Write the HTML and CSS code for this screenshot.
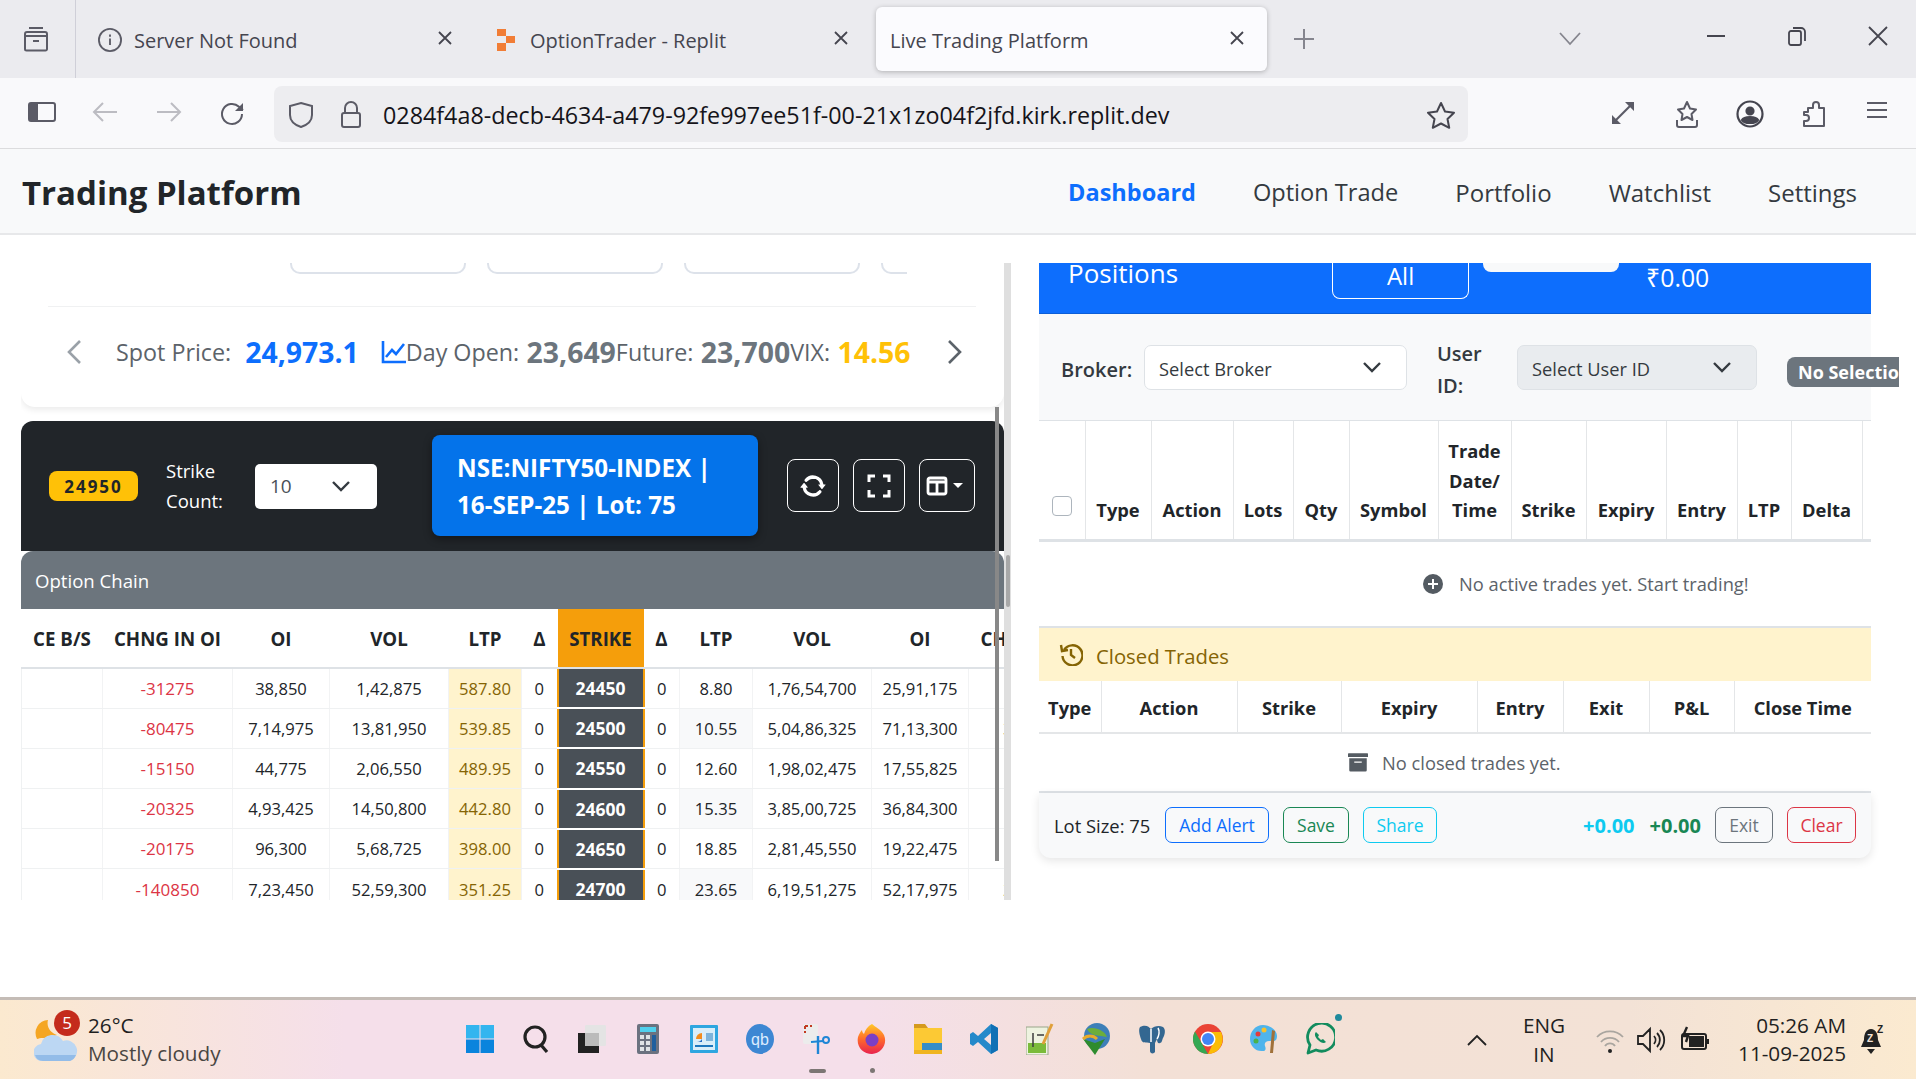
FILE: index.html
```html
<!DOCTYPE html>
<html lang="en">
<head>
	<meta charset="UTF-8">
	<title>Live Trading Platform</title>
	<link rel="stylesheet" href="styles.css">
</head>
<body>
	<div class="tabbar">
		<div class="tab-side">
			<svg width="28" height="28" viewBox="0 0 28 28" fill="none" stroke="#5b5b66" stroke-width="2"><path d="M7 3h14M3 9a2 2 0 0 1 2-2h18a2 2 0 0 1 2 2v15a1.500 1.500 0 0 1-1.500 1.500h-19A1.500 1.500 0 0 1 3 24zM3 11h22M11 16h6"/></svg>
		</div>
		<div class="tab">
			<span class="tab-icon"><svg width="26" height="26" viewBox="0 0 26 26" fill="none" stroke="#5b5b66" stroke-width="2"><circle cx="13" cy="13" r="12"/><path d="M13 11.500v7M13 7v2.500"/></svg></span>
			<span class="tab-title">Server Not Found</span>
			<svg class="tab-close" width="16" height="16" viewBox="0 0 16 16" stroke="#45454f" stroke-width="1.800"><path d="M2 2l12 12M14 2L2 14"/></svg>
		</div>
		<div class="tab">
			<span class="tab-icon"><svg width="18" height="22" viewBox="0 0 18 22" fill="#f26207"><rect x="0" y="0" width="9" height="7" opacity=".8"/><rect x="9" y="7" width="9" height="7" opacity=".8"/><rect x="0" y="14" width="9" height="8" opacity=".8"/></svg></span>
			<span class="tab-title">OptionTrader - Replit</span>
			<svg class="tab-close" width="16" height="16" viewBox="0 0 16 16" stroke="#45454f" stroke-width="1.800"><path d="M2 2l12 12M14 2L2 14"/></svg>
		</div>
		<div class="tab tab-active">
			<span class="tab-title">Live Trading Platform</span>
			<svg class="tab-close" width="16" height="16" viewBox="0 0 16 16" stroke="#45454f" stroke-width="1.800"><path d="M2 2l12 12M14 2L2 14"/></svg>
		</div>
		<div class="tab-new">
			<svg width="22" height="22" viewBox="0 0 22 22" stroke="#85858e" stroke-width="2"><path d="M11 1v20M1 11h20"/></svg>
		</div>
		<div class="tab-list">
			<svg width="22" height="14" viewBox="0 0 22 14" fill="none" stroke="#85858e" stroke-width="1.800"><path d="M1 1l10 11L21 1"/></svg>
		</div>
		<div class="win-btn">
			<svg width="20" height="4" viewBox="0 0 20 4" stroke="#45454f" stroke-width="2"><path d="M1 2h18"/></svg>
		</div>
		<div class="win-btn">
			<svg width="20" height="20" viewBox="0 0 20 20" fill="none" stroke="#45454f" stroke-width="1.800"><rect x="2" y="5" width="12" height="14" rx="2"/><path d="M6 2h8a4 4 0 0 1 4 4v9"/></svg>
		</div>
		<div class="win-btn">
			<svg width="20" height="20" viewBox="0 0 20 20" stroke="#45454f" stroke-width="1.800"><path d="M1 1l18 18M19 1L1 19"/></svg>
		</div>
	</div>

	<div class="toolbar">
		<div class="tool-group">
			<span class="tool-btn"><svg width="28" height="22" viewBox="0 0 28 22" fill="none" stroke="#5b5b66" stroke-width="2"><rect x="1" y="2" width="26" height="18" rx="2"/><path d="M3 3h6v16H3z" fill="#5b5b66"/></svg></span>
			<span class="tool-btn"><svg width="26" height="22" viewBox="0 0 26 22" fill="none" stroke="#bcbcc2" stroke-width="2"><path d="M25 11H2M11 2l-9 9 9 9"/></svg></span>
			<span class="tool-btn"><svg width="26" height="22" viewBox="0 0 26 22" fill="none" stroke="#bcbcc2" stroke-width="2"><path d="M1 11h23M15 2l9 9-9 9"/></svg></span>
			<span class="tool-btn"><svg width="26" height="26" viewBox="0 0 26 26" fill="none" stroke="#5b5b66" stroke-width="2"><path d="M23 13a10 10 0 1 1-3-7.200L24 9"/><path d="M24 2v8h-8z" fill="#5b5b66" stroke="none"/></svg></span>
		</div>
		<div class="urlbar">
			<svg class="url-shield" width="26" height="28" viewBox="0 0 26 28" fill="none" stroke="#5b5b66" stroke-width="2"><path d="M13 2l11 3v9c0 6-5 10-11 12C7 24 2 20 2 14V5z"/></svg>
			<svg class="url-lock" width="22" height="28" viewBox="0 0 22 28" fill="none" stroke="#5b5b66" stroke-width="2"><path d="M5 12V7a6 6 0 0 1 12 0v5"/><rect x="2" y="12" width="18" height="14" rx="2"/></svg>
			<span class="url-text">0284f4a8-decb-4634-a479-92fe997ee51f-00-21x1zo04f2jfd.kirk.replit.dev</span>
			<svg class="url-star" width="30" height="28" viewBox="0 0 30 28" fill="none" stroke="#45454f" stroke-width="2"><path d="M15 2l4 8.500 9 1.200-6.500 6.300 1.700 8.800L15 22.500l-8.200 4.300L8.500 18 2 11.700l9-1.200z" stroke-linejoin="round"/></svg>
		</div>
		<div class="tool-group tool-right">
			<span class="tool-btn"><svg width="26" height="26" viewBox="0 0 26 26" fill="none" stroke="#5b5b66" stroke-width="2.200"><path d="M3 23L23 3"/><path d="M15 2h9v9zM2 15v9h9z" fill="#5b5b66" stroke="none"/></svg></span>
			<span class="tool-btn"><svg width="26" height="28" viewBox="0 0 26 28" fill="none" stroke="#5b5b66" stroke-width="2"><path d="M13 2l3 6.500 6 1-4.500 4.500 1 6L13 17l-5.500 3 1-6L4 9.500l6-1z" stroke-linejoin="round"/><path d="M3 20v5a2 2 0 0 0 2 2h16a2 2 0 0 0 2-2v-5"/></svg></span>
			<span class="tool-btn"><svg width="28" height="28" viewBox="0 0 28 28" fill="none" stroke="#45454f" stroke-width="2.200"><circle cx="14" cy="14" r="12.500"/><circle cx="14" cy="11" r="3.500" fill="#45454f"/><path d="M6 20c2-4 14-4 16 0-2 4-14 4-16 0z" fill="#45454f"/></svg></span>
			<span class="tool-btn"><svg width="26" height="28" viewBox="0 0 26 28" fill="none" stroke="#5b5b66" stroke-width="2"><path d="M3 12h4V8h5V5a3 3 0 0 1 6 0v3h5v18H3v-5h2a3 3 0 0 0 0-6H3z" stroke-linejoin="round"/></svg></span>
			<span class="tool-btn"><svg width="24" height="20" viewBox="0 0 24 20" stroke="#5b5b66" stroke-width="2"><path d="M2 3h20M2 10h20M2 17h20"/></svg></span>
		</div>
	</div>

	<div class="navbar">
		<div class="brand">Trading Platform</div>
		<nav class="nav-links">
			<a class="nav-link nav-current">Dashboard</a>
			<a class="nav-link">Option Trade</a>
			<a class="nav-link">Portfolio</a>
			<a class="nav-link">Watchlist</a>
			<a class="nav-link">Settings</a>
		</nav>
	</div>

	<div class="page">
		<div class="page-clip">
			<div class="left-col">
				<div class="market-card">
					<div class="idx-cards">
						<div class="idx-card"></div>
						<div class="idx-card"></div>
						<div class="idx-card"></div>
						<div class="idx-card idx-card-cut"></div>
					</div>
					<div class="price-row">
						<svg class="price-prev" width="18" height="26" viewBox="0 0 18 26" fill="none" stroke="#9aa1a8" stroke-width="2.600"><path d="M15 2L4 13l11 11"/></svg>
						<span class="price-label">Spot Price:</span>
						<b class="price-spot">24,973.1</b>
						<svg class="price-chart" width="25" height="24" viewBox="0 0 25 24" fill="none" stroke="#0d6efd" stroke-width="2.600"><path d="M2 1v21h23" /><path d="M5 17l6-7 4 4 8-10" /></svg>
						<span class="price-label">Day Open:</span>
						<b class="price-val">&nbsp;23,649</b>
						<span class="price-label">Future:</span>
						<b class="price-val">&nbsp;23,700</b>
						<span class="price-label">VIX:</span>
						<b class="price-vix">&nbsp;14.56</b>
						<svg class="price-next" width="18" height="26" viewBox="0 0 18 26" fill="none" stroke="#5c636a" stroke-width="2.600"><path d="M3 2l11 11L3 24"/></svg>
					</div>
				</div>

				<div class="chain-bar">
					<span class="atm-badge">24950</span>
					<span class="strike-label">Strike Count:</span>
					<div class="strike-select">
						<span>10</span>
						<svg width="20" height="12" viewBox="0 0 20 12" fill="none" stroke="#343a40" stroke-width="2.400"><path d="M2 2l8 8 8-8"/></svg>
					</div>
					<div class="symbol-box">NSE:NIFTY50-INDEX | 16-SEP-25 | Lot: 75</div>
					<span class="bar-btn"><svg width="26" height="26" viewBox="0 0 16 16" fill="#fff"><path d="M11.534 7h3.932a.25.25 0 0 1 .192.41l-1.966 2.360a.25.25 0 0 1-.384 0l-1.966-2.360a.25.25 0 0 1 .192-.41zm-11 2h3.932a.25.25 0 0 0 .192-.41L2.692 6.230a.25.25 0 0 0-.384 0L.342 8.590A.25.25 0 0 0 .534 9z"/><path fill-rule="evenodd" d="M8 3c-1.552 0-2.940.707-3.857 1.818a.5.5 0 1 1-.771-.636A6.002 6.002 0 0 1 13.917 7H12.900A5.002 5.002 0 0 0 8 3zM3.100 9a5.002 5.002 0 0 0 8.757 2.182.5.5 0 1 1 .771.636A6.002 6.002 0 0 1 2.083 9H3.100z" stroke="#fff" stroke-width="1"/></svg></span>
					<span class="bar-btn"><svg width="24" height="24" viewBox="0 0 24 24" fill="none" stroke="#fff" stroke-width="3"><path d="M2 8V2h6M16 2h6v6M22 16v6h-6M8 22H2v-6"/></svg></span>
					<span class="bar-btn bar-btn-wide"><svg width="22" height="22" viewBox="0 0 22 22" fill="none" stroke="#fff" stroke-width="2.800"><rect x="2" y="3" width="18" height="16" rx="2"/><path d="M2 7h18M11 7v12"/></svg><i class="caret"></i></span>
				</div>

				<div class="chain-head">Option Chain</div>
				<table class="chain">
					<colgroup><col class="c-bs"><col class="c-chng"><col class="c-oi"><col class="c-vol"><col class="c-ltp"><col class="c-delta"><col class="c-strike"><col class="c-delta"><col class="c-ltp"><col class="c-vol"><col class="c-oi"><col class="c-rest"></colgroup>
					<thead>
						<tr><th>CE B/S</th><th>CHNG IN OI</th><th>OI</th><th>VOL</th><th>LTP</th><th>Δ</th><th class="strike-head">STRIKE</th><th>Δ</th><th>LTP</th><th>VOL</th><th>OI</th><th class="cut-head">CHNG</th></tr>
					</thead>
					<tbody>
						<tr><td></td><td class="neg">-31275</td><td>38,850</td><td>1,42,875</td><td class="ltp-ce">587.80</td><td>0</td><td class="strike">24450</td><td>0</td><td>8.80</td><td>1,76,54,700</td><td>25,91,175</td><td class="pos">1</td></tr>
						<tr><td></td><td class="neg">-80475</td><td>7,14,975</td><td>13,81,950</td><td class="ltp-ce">539.85</td><td>0</td><td class="strike">24500</td><td>0</td><td class="ltp-pe">10.55</td><td>5,04,86,325</td><td>71,13,300</td><td class="pos">3</td></tr>
						<tr><td></td><td class="neg">-15150</td><td>44,775</td><td>2,06,550</td><td class="ltp-ce">489.95</td><td>0</td><td class="strike">24550</td><td>0</td><td>12.60</td><td>1,98,02,475</td><td>17,55,825</td><td class="pos"></td></tr>
						<tr><td></td><td class="neg">-20325</td><td>4,93,425</td><td>14,50,800</td><td class="ltp-ce">442.80</td><td>0</td><td class="strike">24600</td><td>0</td><td class="ltp-pe">15.35</td><td>3,85,00,725</td><td>36,84,300</td><td class="pos">1</td></tr>
						<tr><td></td><td class="neg">-20175</td><td>96,300</td><td>5,68,725</td><td class="ltp-ce">398.00</td><td>0</td><td class="strike">24650</td><td>0</td><td>18.85</td><td>2,81,45,550</td><td>19,22,475</td><td class="pos"></td></tr>
						<tr><td></td><td class="neg">-140850</td><td>7,23,450</td><td>52,59,300</td><td class="ltp-ce">351.25</td><td>0</td><td class="strike">24700</td><td>0</td><td class="ltp-pe">23.65</td><td>6,19,51,275</td><td>52,17,975</td><td class="pos">2</td></tr>
					</tbody>
				</table>
				<div class="inner-thumb"></div>
			</div>

			<div class="outer-track"><div class="outer-thumb"></div></div>

			<div class="right-col">
				<div class="pos-head">
					<span class="pos-title">Positions</span>
					<span class="pos-all">All</span>
					<span class="pos-pill"></span>
					<span class="pos-total">₹0.00</span>
				</div>
				<div class="filters">
					<label class="f-label f-broker">Broker:</label>
					<div class="f-select f-select-broker"><span>Select Broker</span><svg width="20" height="12" viewBox="0 0 20 12" fill="none" stroke="#343a40" stroke-width="2.400"><path d="M2 2l8 8 8-8"/></svg></div>
					<label class="f-label f-user">User ID:</label>
					<div class="f-select f-select-user"><span>Select User ID</span><svg width="20" height="12" viewBox="0 0 20 12" fill="none" stroke="#343a40" stroke-width="2.400"><path d="M2 2l8 8 8-8"/></svg></div>
					<span class="no-sel">No Selection</span>
				</div>
				<table class="active-table">
					<colgroup><col class="a1"><col class="a2"><col class="a3"><col class="a4"><col class="a5"><col class="a6"><col class="a7"><col class="a8"><col class="a9"><col class="a10"><col class="a11"><col class="a12"><col class="a13"></colgroup>
					<thead>
						<tr><th><span class="check"></span></th><th>Type</th><th>Action</th><th>Lots</th><th>Qty</th><th>Symbol</th><th>Trade Date/ Time</th><th>Strike</th><th>Expiry</th><th>Entry</th><th>LTP</th><th>Delta</th><th></th></tr>
					</thead>
				</table>
				<div class="empty-active">
					<svg width="20" height="20" viewBox="0 0 20 20"><circle cx="10" cy="10" r="10" fill="#545b62"/><path d="M10 5v10M5 10h10" stroke="#fff" stroke-width="2"/></svg>
					<span>No active trades yet. Start trading!</span>
				</div>
				<div class="closed-head">
					<svg width="24" height="24" viewBox="0 0 24 24" fill="none" stroke="#856404" stroke-width="2.400"><path d="M5 8a10 10 0 1 1-1.500 6"/><path d="M2 3l1 6 6-1" /><path d="M12 7v6l4 3"/></svg>
					<span class="closed-title">Closed Trades</span>
				</div>
				<table class="closed-table">
					<colgroup><col class="b1"><col class="b2"><col class="b3"><col class="b4"><col class="b5"><col class="b6"><col class="b7"><col class="b8"></colgroup>
					<thead>
						<tr><th>Type</th><th>Action</th><th>Strike</th><th>Expiry</th><th>Entry</th><th>Exit</th><th>P&amp;L</th><th>Close Time</th></tr>
					</thead>
				</table>
				<div class="empty-closed">
					<svg width="20" height="20" viewBox="0 0 16 16" fill="#545b62"><path d="M0 1.500A.5.5 0 0 1 .5 1h15a.5.5 0 0 1 .5.5V4H0zM1 5h14v9.500a1 1 0 0 1-1 1H2a1 1 0 0 1-1-1zm4 2.500v1h6v-1z" fill-rule="evenodd"/></svg>
					<span>No closed trades yet.</span>
				</div>
				<div class="pos-foot">
					<span class="lot-size">Lot Size: 75</span>
					<span class="btn btn-blue">Add Alert</span>
					<span class="btn btn-green">Save</span>
					<span class="btn btn-cyan">Share</span>
					<b class="pnl pnl-cyan">+0.00</b>
					<b class="pnl pnl-green">+0.00</b>
					<span class="btn btn-gray">Exit</span>
					<span class="btn btn-red">Clear</span>
				</div>
			</div>
		</div>
	</div>

	<div class="taskbar">
		<div class="weather">
			<svg class="weather-icon" width="44" height="46" viewBox="0 0 44 46"><path d="M14 3a13 13 0 0 0-11 19c3-1 8-2 12 1 2-3 5-4 8-5-6-2-11-8-9-15z" fill="#f5a623"/><path d="M9 44a8.500 8.500 0 0 1-2-17 12 12 0 0 1 22-3 10 10 0 0 1 7 20z" fill="#bcd7f3"/><path d="M9 44a8.500 8.500 0 0 1-8-6h41a10 10 0 0 1-6 6z" fill="#93bce8"/></svg>
			<span class="weather-badge">5</span>
			<div class="weather-text"><span>26°C</span><span class="weather-sub">Mostly cloudy</span></div>
		</div>
		<div class="task-icons">
			<span class="task-icon"><svg width="28" height="28" viewBox="0 0 28 28"><path d="M0 0h13.500v13.500H0zM14.500 0H28v13.500H14.500z" fill="#33b5ef"/><path d="M0 14.500h13.500V28H0zM14.500 14.500H28V28H14.500z" fill="#0a84dd"/></svg></span>
			<span class="task-icon"><svg width="28" height="30" viewBox="0 0 28 30" fill="none" stroke="#222" stroke-width="3.200"><circle cx="13" cy="13" r="10"/><path d="M19 21l6 7"/></svg></span>
			<span class="task-icon"><svg width="28" height="28" viewBox="0 0 28 28"><rect x="0" y="8" width="21" height="20" fill="#222"/><rect x="7" y="0" width="21" height="21" rx="1" fill="#e4e4e4"/><rect x="7" y="8" width="14" height="13" fill="#bbb"/></svg></span>
			<span class="task-icon"><svg width="22" height="30" viewBox="0 0 22 30"><rect width="22" height="30" rx="2" fill="#6b7280"/><rect x="3" y="3" width="16" height="5" fill="#4fd0ee"/><path d="M3 11h4v4H3zM9 11h4v4H9zM3 17h4v4H3zM9 17h4v4H9zM3 23h4v4H3zM9 23h4v4H9z" fill="#dfe3e6"/><path d="M15 11h4v16h-4z" fill="#1f5f9e"/></svg></span>
			<span class="task-icon"><svg width="28" height="28" viewBox="0 0 28 28"><rect width="28" height="28" rx="1" fill="#2ea6e0"/><rect x="3" y="3" width="22" height="22" fill="#d9eef9"/><path d="M6 14a6 6 0 0 1 6-6v6z" fill="#f28c1e"/><path d="M12 14a6 6 0 0 1-6 3h6z" fill="#2a6fc4"/><path d="M16 8h7v8h-7z" fill="#7fb4da"/><path d="M5 20h18v2H5z" fill="#1d77bd"/></svg></span>
			<span class="task-icon"><svg width="28" height="30" viewBox="0 0 28 30"><ellipse cx="14" cy="15" rx="14" ry="15" fill="#3d87d3"/><text x="14" y="21" font-family="Liberation Sans" font-size="16" fill="#dcecff" text-anchor="middle">qb</text></svg></span>
			<span class="task-icon"><svg width="30" height="34" viewBox="0 0 30 34" fill="none"><rect x="2" y="2" width="15" height="20" rx="2" fill="#ececec"/><path d="M4 4h3M9 4h2M4 4v3M4 9v2" stroke="#c23b22" stroke-width="2"/><path d="M17 14v18" stroke="#1f86d6" stroke-width="2.400"/><circle cx="25" cy="18" r="3" stroke="#1f86d6" stroke-width="2"/><path d="M10 20l12-1" stroke="#1f86d6" stroke-width="2"/></svg></span>
			<span class="task-icon"><svg width="30" height="32" viewBox="0 0 30 32"><defs><linearGradient id="ff" x1="0" y1="0" x2="0" y2="1"><stop offset="0" stop-color="#ffc928"/><stop offset=".5" stop-color="#ff6b2b"/><stop offset="1" stop-color="#e8224f"/></linearGradient></defs><path d="M15 1c3 3 9 5 12 11 4 9-3 19-12 19S-1 24 1 14c1-3 3-6 4-7 0 2 1 3 2 4 1-4 4-8 8-10z" fill="url(#ff)"/><circle cx="15" cy="17" r="6.500" fill="#7b3fc4"/></svg></span>
			<span class="task-icon"><svg width="28" height="30" viewBox="0 0 28 30"><path d="M0 0h11l3 4h-14z" fill="#d59a1e"/><rect y="4" width="28" height="26" fill="#fcc934"/><rect x="8" y="19" width="20" height="11" fill="#1f86d6" opacity=".9"/><rect y="26" width="28" height="4" fill="#f0b420"/></svg></span>
			<span class="task-icon"><svg width="28" height="30" viewBox="0 0 28 30"><path d="M21 0l7 4v22l-7 4L8 18l-5 4-3-2v-10l3-2 5 4zM21 9l-7 6 7 6z" fill="#2489ca"/><path d="M21 0l7 4v22l-7 4z" fill="#1070b5"/></svg></span>
			<span class="task-icon"><svg width="28" height="32" viewBox="0 0 28 32"><rect x="0" y="4" width="22" height="28" fill="#eef3e0" stroke="#9aa58a"/><rect x="2" y="20" width="18" height="10" fill="#7bbb3a"/><path d="M7 10v14M11 12h7" stroke="#3c3c3c" stroke-width="1.500"/><path d="M26 1l-9 20" stroke="#e0a03a" stroke-width="3"/></svg></span>
			<span class="task-icon"><svg width="30" height="32" viewBox="0 0 30 32"><circle cx="16" cy="13" r="13" fill="#3d7fb8"/><path d="M6 6c8-3 18 2 20 8-8-2-16 0-20-8z" fill="#6cae3b"/><path d="M2 16l12 4 10-4-10 16z" fill="#2e8b2e"/><path d="M2 16c4-4 10-4 14 0" stroke="#e8ab2a" stroke-width="3" fill="none"/></svg></span>
			<span class="task-icon"><svg width="28" height="30" viewBox="0 0 28 30"><path d="M2 3c6-3 9 0 11 2 3-3 8-4 12-2 3 2 2 8 0 11-1 2-1 5-3 5-2 1-3-1-3-4l-2 4v9c-1 2-5 2-5-1v-8C8 18 4 20 3 15 2 12 0 6 2 3z" fill="#336791"/><path d="M13 5v13M20 4c2 3 1 8-1 11" stroke="#fff" stroke-width="1.500" fill="none"/></svg></span>
			<span class="task-icon"><svg width="30" height="30" viewBox="0 0 30 30"><circle cx="15" cy="15" r="15" fill="#ea4335"/><path d="M2 7.500L15 30A15 15 0 0 1 2 7.500z" fill="#34a853"/><path d="M15 8h13a15 15 0 0 1-13 22l7-15z" fill="#fbbc05"/><circle cx="15" cy="15" r="7.500" fill="#fff"/><circle cx="15" cy="15" r="6" fill="#4285f4"/></svg></span>
			<span class="task-icon"><svg width="28" height="30" viewBox="0 0 28 30"><path d="M13 1C5 1 0 8 0 15s6 13 13 12c3 0 3-3 2-5-1-3 1-5 4-5h4c3 0 4-2 4-5C27 6 20 1 13 1z" fill="#4fb4ec"/><circle cx="8" cy="10" r="2.500" fill="#e33b3b"/><circle cx="14" cy="6" r="2.500" fill="#f6c22c"/><circle cx="6" cy="17" r="2.500" fill="#49b24a"/><path d="M22 6l3 1-2 22h-3z" fill="#a0713a"/></svg></span>
			<span class="task-icon"><svg width="30" height="32" viewBox="0 0 30 32" fill="none"><path d="M3 30l2-8a14 14 0 1 1 6 5z" stroke="#128c5e" stroke-width="2.800" stroke-linejoin="round"/><path d="M11 9c-2 2-1 5 2 8s6 4 8 2l-3-3-2 1-3-3 1-2z" fill="#128c5e"/></svg><i class="notify-dot"></i></span>
		</div>
		<div class="tray">
			<svg class="tray-up" width="20" height="12" viewBox="0 0 20 12" fill="none" stroke="#222" stroke-width="1.800"><path d="M1 11l9-9 9 9"/></svg>
			<div class="tray-lang"><span>ENG</span><span>IN</span></div>
			<svg class="tray-wifi" width="28" height="30" viewBox="0 0 28 30" fill="none" stroke="#a9a59f" stroke-width="1.800"><path d="M1 12a18 18 0 0 1 26 0M5 17a12 12 0 0 1 18 0M9 21a6 6 0 0 1 10 0"/><circle cx="14" cy="26" r="2" fill="#222" stroke="none"/></svg>
			<svg class="tray-vol" width="30" height="30" viewBox="0 0 30 30" fill="none" stroke="#222" stroke-width="1.800"><path d="M2 11h5l7-7v22l-7-7H2zM18 11a6 6 0 0 1 0 8M21 8a10 10 0 0 1 0 14M24 5a14 14 0 0 1 0 20"/></svg>
			<svg class="tray-bat" width="30" height="28" viewBox="0 0 30 28" fill="none" stroke="#222" stroke-width="2"><rect x="2" y="8" width="24" height="15" rx="2"/><rect x="9" y="10" width="15" height="11" fill="#222" stroke="none"/><path d="M28 13v5"/><path d="M7 1L3 10h5l-2 6" stroke-width="2.400"/></svg>
			<div class="tray-clock"><span>05:26 AM</span><span>11-09-2025</span></div>
			<svg class="tray-bell" width="26" height="34" viewBox="0 0 26 34"><path d="M11 6c5 0 7 5 7 11l3 7H1l3-7c0-6 2-11 7-11z" fill="#222"/><path d="M7 26h8l-4 5z" fill="#222"/><text x="7" y="19" font-family="Liberation Sans" font-size="10" font-weight="700" fill="#f6e4d8">Z</text><text x="17" y="10" font-family="Liberation Sans" font-size="10" font-weight="700" fill="#222">Z</text></svg>
		</div>
		<i class="task-dash"></i>
		<i class="task-dot"></i>
	</div>
</body>
</html>
```

FILE: styles.css
```css
* {
	margin: 0;
	padding: 0;
	box-sizing: border-box;
}
body {
	width: 1916px;
	height: 1079px;
	overflow: hidden;
	display: flex;
	flex-direction: column;
	font-family: "Open Sans", "Noto Sans", sans-serif;
	color: #212529;
	background: #fff;
}

/* browser chrome */
.tabbar {
	height: 78px;
	display: flex;
	align-items: center;
	background: #ebebef;
	flex: none;
}
.tab-side {
	width: 76px;
	height: 78px;
	flex: none;
	border-right: 1px solid #cfcfd8;
	display: flex;
	align-items: center;
	justify-content: center;
	margin-right: 8px;
	padding-right: 4px;
}
.tab {
	width: 391px;
	height: 64px;
	flex: none;
	margin-right: 5px;
	padding: 2px 22px 0 14px;
	display: flex;
	align-items: center;
	border-radius: 6px;
	font-size: 20px;
	color: #45454f;
}
.tab-active {
	background: #fbfbfe;
	box-shadow: 0 1px 5px rgba(0, 0, 0, .25);
}
.tab-icon {
	width: 24px;
	margin-right: 12px;
	display: flex;
	align-items: center;
	justify-content: center;
}
.tab-close {
	margin-left: auto;
	margin-bottom: 4px;
}
.tab-new {
	width: 36px;
	flex: none;
	margin-left: 14px;
	display: flex;
	justify-content: center;
}
.tab-list {
	margin-left: 237px;
	margin-right: 94px;
	width: 22px;
	flex: none;
	display: flex;
}
.win-btn {
	width: 81px;
	flex: none;
	display: flex;
	justify-content: center;
	margin-bottom: 6px;
}
.toolbar {
	height: 71px;
	display: flex;
	align-items: center;
	flex: none;
	background: #f9f9fb;
	border-bottom: 1px solid #dcdcde;
	padding: 1px 7px 0 10px;
}
.tool-group {
	display: flex;
}
.tool-btn {
	width: 63.500px;
	display: flex;
	justify-content: center;
}
.tool-right {
	margin-left: auto;
}
.urlbar {
	width: 1194px;
	height: 56px;
	margin-left: 10px;
	display: flex;
	align-items: center;
	background: #ededf0;
	border-radius: 8px;
	padding: 2px 12px 0 14px;
	font-size: 23.300px;
	color: #15141a;
}
.url-lock {
	margin-left: 26px;
}
.url-text {
	margin-left: 21px;
}
.url-star {
	margin-left: auto;
}

/* app header */
.navbar {
	height: 86px;
	flex: none;
	display: flex;
	align-items: center;
	justify-content: space-between;
	padding: 2px 59px 0 22px;
	background: #f8f9fa;
	border-bottom: 2px solid #e7e8ea;
}
.brand {
	font-size: 33px;
	font-weight: 700;
}
.nav-links {
	display: flex;
	gap: 57px;
}
.nav-link {
	font-size: 24px;
	color: #343a40;
}
.nav-link:nth-child(2) {
	font-size: 23.600px;
}
.nav-current {
	font-size: 23.500px;
	font-weight: 700;
	color: #0d6efd;
}

/* page */
.page {
	flex: 1;
	padding-top: 28px;
	min-height: 0;
}
.page-clip {
	height: 637px;
	width: 1899px;
	padding-left: 21px;
	display: flex;
	overflow: hidden;
	border-bottom-right-radius: 12px;
}
.left-col {
	width: 983px;
	position: relative;
	overflow: hidden;
	flex: none;
}
.market-card {
	height: 144px;
	background: #fff;
	border-radius: 0 0 14px 14px;
	box-shadow: 0 3px 6px rgba(0, 0, 0, .08);
	padding: 0 28px 0 27px;
	margin-bottom: 14px;
}
.idx-cards {
	height: 44px;
	padding: 0 0 0 243px;
	display: flex;
	gap: 22px;
	border-bottom: 1px solid #f0f1f2;
	align-items: flex-start;
}
.idx-card {
	width: 176px;
	height: 11px;
	margin-left: -1px;
	border: 2px solid #dde2ea;
	border-top: none;
	border-radius: 0 0 10px 10px;
}
.idx-card-cut {
	width: 26px;
	border-right: none;
	border-radius: 0 0 0 10px;
}
.price-row {
	height: 90px;
	display: flex;
	align-items: center;
	font-size: 23.300px;
	color: #5c636a;
	white-space: nowrap;
}
.price-prev {
	margin-right: 33px;
	margin-left: 17px;
}
.price-spot {
	font-size: 28.400px;
	color: #0d6efd;
	margin-left: 14px;
	margin-right: 22px;
}
.price-chart {
	flex: none;
}
.price-val {
	font-size: 28.400px;
	color: #6c757d;
}
.price-vix {
	font-size: 28.400px;
	color: #ffc107;
}
.price-next {
	margin-left: 35px;
}
.chain-bar {
	height: 130px;
	background: #212529;
	border-radius: 12px 12px 0 0;
	display: flex;
	align-items: center;
	padding-left: 28px;
}
.atm-badge {
	width: 89px;
	height: 30px;
	border-radius: 8px;
	background: #ffc107;
	color: #212529;
	font-size: 17px;
	font-weight: 700;
	letter-spacing: 2px;
	display: flex;
	align-items: center;
	justify-content: center;
}
.strike-label {
	width: 80px;
	margin-left: 28px;
	margin-right: 9px;
	font-size: 18.500px;
	line-height: 30px;
	color: #fff;
}
.strike-select {
	width: 122px;
	height: 45px;
	background: #fff;
	border-radius: 5px;
	padding: 0 26px 0 15px;
	display: flex;
	align-items: center;
	justify-content: space-between;
	font-size: 19px;
	color: #495057;
}
.symbol-box {
	width: 326px;
	height: 101px;
	margin: 0 29px 1px 55px;
	padding: 1px 20px 0 25px;
	display: flex;
	align-items: center;
	border-radius: 8px;
	background: #0473ea;
	box-shadow: 0 3px 8px rgba(0, 0, 0, .4);
	color: #fff;
	font-size: 24.200px;
	font-weight: 700;
	line-height: 37px;
}
.bar-btn {
	width: 52px;
	height: 53px;
	margin: 0 14px 1px 0;
	border: 1px solid #fff;
	border-radius: 8px;
	display: flex;
	align-items: center;
	justify-content: center;
}
.bar-btn-wide {
	width: 56px;
	margin-right: 0;
	justify-content: flex-start;
	padding-left: 6px;
}
.caret {
	margin-left: 5px;
	border-top: 5px solid #fff;
	border-left: 5px solid transparent;
	border-right: 5px solid transparent;
}
.chain-head {
	height: 58px;
	background: #6c757d;
	border-radius: 12px 12px 0 0;
	padding-left: 14px;
	display: flex;
	align-items: center;
	color: #fff;
	font-size: 18.600px;
}
.chain {
	width: 1000px;
	table-layout: fixed;
	border-collapse: collapse;
	font-size: 16.600px;
	text-align: center;
	color: #212529;
}
.c-bs { width: 81px; }
.c-chng { width: 130px; }
.c-oi { width: 97px; }
.c-vol { width: 119px; }
.c-ltp { width: 73px; }
.c-delta { width: 36px; }
.c-strike { width: 86px; }
.c-rest { width: 81px; }
.chain th {
	height: 59px;
	font-size: 18.700px;
	font-weight: 700;
	border-bottom: 2px solid #dee2e6;
	white-space: nowrap;
}
.chain td {
	height: 40.200px;
	border-bottom: 1px solid #eff1f2;
	border-left: 1px solid #f2f3f4;
	white-space: nowrap;
}
.chain td:first-child {
	border-left: 1px solid #eff1f2;
}
.chain .strike-head {
	background: #f59e0b;
}
.chain .cut-head {
	text-align: left;
	padding-left: 12px;
}
.chain .neg {
	color: #dc3545;
	font-size: 17px;
}
.chain .pos {
	color: #198754;
	text-align: left;
	padding-left: 34px;
}
.chain .ltp-ce {
	background: #fff3cd;
	color: #856404;
}
.chain .ltp-pe {
	background: #f8f9fa;
}
.chain .strike {
	background: #495057;
	color: #fff;
	font-size: 17.500px;
	font-weight: 700;
	border-left: 2px solid #f59e0b;
	border-right: 2px solid #f59e0b;
	border-bottom: 2px solid #fff;
}
.inner-thumb {
	position: absolute;
	right: 5px;
	top: 144px;
	width: 4px;
	height: 454px;
	background: #888;
}
.outer-track {
	width: 7px;
	flex: none;
	background: #dfdfdf;
	padding: 292px 1px 0 2px;
}
.outer-thumb {
	height: 52px;
	border-radius: 2px;
	background: #a8a8a8;
}

/* right column */
.right-col {
	width: 832px;
	margin-left: 28px;
	flex: none;
	overflow: visible;
}
.pos-head {
	height: 51px;
	background: #0d6efd;
	display: flex;
	align-items: flex-start;
	color: #fff;
	overflow: hidden;
	border-bottom: 1px solid #0b5ed7;
}
.pos-title {
	margin-left: 29px;
	margin-top: -8px;
	font-size: 26px;
	line-height: 36px;
}
.pos-all {
	width: 137px;
	height: 36px;
	margin-left: 154px;
	border: 1px solid #fff;
	border-top: none;
	border-radius: 0 0 8px 8px;
	text-align: center;
	font-size: 24px;
	line-height: 26px;
}
.pos-pill {
	width: 136px;
	height: 9px;
	margin-left: 14px;
	background: #f8f9fa;
	border-radius: 0 0 8px 8px;
}
.pos-total {
	margin-left: 27px;
	font-size: 24.800px;
	line-height: 29px;
}
.filters {
	height: 107px;
	display: flex;
	align-items: flex-start;
	background: #f8f9fa;
	border-bottom: 1px solid #dee2e6;
	padding: 31px 0 0 22px;
}
.f-label {
	font-size: 20px;
	font-weight: 600;
	color: #343a40;
	flex: none;
}
.f-broker {
	width: 83px;
	margin-top: 11px;
}
.f-user {
	width: 60px;
	margin-left: 30px;
	margin-right: 20px;
	margin-top: -7px;
	line-height: 32px;
}
.f-select {
	height: 45px;
	flex: none;
	border: 1px solid #dee2e6;
	border-radius: 7px;
	display: flex;
	align-items: center;
	justify-content: space-between;
	padding: 0 24px 0 14px;
	font-size: 18.300px;
	color: #343a40;
}
.f-select span {
	padding-top: 2px;
}
.f-select svg {
	margin-bottom: 2px;
}
.f-select-broker {
	width: 263px;
	background: #fff;
}
.f-select-user {
	width: 240px;
	background: #e9ecef;
}
.no-sel {
	width: 112px;
	height: 30px;
	margin-left: 30px;
	margin-top: 12px;
	padding-left: 11px;
	background: #6c757d;
	border-radius: 8px 0 0 8px;
	color: #fff;
	font-size: 18px;
	font-weight: 700;
	line-height: 30px;
	white-space: nowrap;
	overflow: hidden;
	flex: none;
}
.active-table, .closed-table {
	width: 832px;
	table-layout: fixed;
	border-collapse: collapse;
	font-size: 18.300px;
}
.active-table th {
	height: 119px;
	vertical-align: bottom;
	padding: 0 4px 14px;
	line-height: 29.500px;
	font-weight: 700;
	text-align: center;
	border-right: 1px solid #e4e6e8;
	border-bottom: 3px solid #dee2e6;
}
.active-table th:last-child {
	border-right: none;
}
.a1 { width: 46px; }
.a2 { width: 66px; }
.a3 { width: 82px; }
.a4 { width: 60px; }
.a5 { width: 56px; }
.a6 { width: 89px; }
.a7 { width: 73px; }
.a8 { width: 75px; }
.a9 { width: 80px; }
.a10 { width: 71px; }
.a11 { width: 54px; }
.a12 { width: 71px; }
.a13 { width: 9px; }
.check {
	display: block;
	width: 20px;
	height: 20px;
	margin: 0 0 9px 9px;
	border: 1px solid #adb5bd;
	border-radius: 4px;
	background: #fff;
}
.empty-active {
	height: 86px;
	display: flex;
	align-items: center;
	padding-left: 384px;
	gap: 16px;
	border-bottom: 2px solid #dee2e6;
	font-size: 18.300px;
	color: #5c636a;
}
.closed-head {
	height: 53px;
	background: #fff3cd;
	display: flex;
	align-items: center;
	gap: 13px;
	padding-left: 20px;
	font-size: 20.300px;
	color: #856404;
}
.closed-title {
	padding-top: 3px;
}
.closed-table th {
	height: 52px;
	padding-top: 2px;
	font-weight: 700;
	text-align: center;
	border-right: 1px solid #e4e6e8;
	border-bottom: 2px solid #e4e6e8;
}
.closed-table th:last-child {
	border-right: none;
}
.b1 { width: 62px; }
.b2 { width: 136px; }
.b3 { width: 104px; }
.b4 { width: 136px; }
.b5 { width: 86px; }
.b6 { width: 86px; }
.b7 { width: 85px; }
.b8 { width: 137px; }
.empty-closed {
	height: 59px;
	display: flex;
	align-items: center;
	gap: 14px;
	padding-left: 309px;
	border-bottom: 2px solid #dee2e6;
	font-size: 18.300px;
	color: #5c636a;
}
.pos-foot {
	height: 65px;
	display: flex;
	align-items: center;
	background: #f8f9fa;
	border-radius: 0 0 12px 12px;
	box-shadow: 0 3px 10px rgba(0, 0, 0, .1);
	padding: 0 15px;
	font-size: 18.400px;
}
.lot-size {
	width: 111px;
}
.btn {
	height: 36px;
	display: flex;
	align-items: center;
	justify-content: center;
	border: 1px solid;
	border-radius: 7px;
	font-size: 17.500px;
}
.btn-blue {
	width: 104px;
	color: #0d6efd;
	border-color: #0d6efd;
}
.btn-green {
	width: 66px;
	margin-left: 14px;
	color: #198754;
	border-color: #198754;
}
.btn-cyan {
	width: 74px;
	margin-left: 14px;
	color: #0dcaf0;
	border-color: #0dcaf0;
}
.btn-gray {
	width: 58px;
	margin-left: 14px;
	color: #6c757d;
	border-color: #6c757d;
}
.btn-red {
	width: 69px;
	margin-left: 14px;
	color: #dc3545;
	border-color: #dc3545;
}
.pnl {
	font-size: 20px;
}
.pnl-cyan {
	color: #0dcaf0;
	margin-left: auto;
}
.pnl-green {
	color: #198754;
	margin-left: 15px;
}

/* windows taskbar */
.taskbar {
	height: 82px;
	flex: none;
	position: relative;
	display: flex;
	align-items: center;
	border-top: 3px solid #c4bcb6;
	background: linear-gradient(90deg, #fbe9cf 0, #f5dfea 18%, #f5dfea 45%, #f3e0d6 60%, #f3e2d6 85%, #fbead0 100%);
	font-size: 20.700px;
	color: #1f1f1f;
}
.weather {
	width: 478px;
	flex: none;
	position: relative;
	display: flex;
	align-items: center;
	padding-left: 34px;
}
.weather-badge {
	position: absolute;
	left: 54px;
	top: -1px;
	width: 26px;
	height: 26px;
	border-radius: 50%;
	background: #c42b1c;
	color: #fff;
	font-size: 17px;
	text-align: center;
	line-height: 26px;
}
.weather-text {
	margin-left: 10px;
	padding-bottom: 2px;
	display: flex;
	flex-direction: column;
	line-height: 28px;
}
.weather-sub {
	color: #4a4642;
}
.task-icons {
	width: 896px;
	margin: 0 0 1px -26px;
	display: flex;
}
.task-icon {
	width: 56.130px;
	display: flex;
	align-items: center;
	justify-content: center;
	position: relative;
}
.notify-dot {
	position: absolute;
	right: 6px;
	top: -8px;
	width: 7px;
	height: 7px;
	border-radius: 50%;
	background: #1f8a9c;
}
.tray {
	flex: 1;
	display: flex;
	align-items: center;
	padding-left: 0;
}
.tray-up {
	margin-left: 119px;
}
.tray-lang {
	width: 60px;
	margin-left: 27px;
	display: flex;
	flex-direction: column;
	align-items: center;
	line-height: 29px;
}
.tray-wifi {
	margin-left: 22px;
}
.tray-vol {
	margin-left: 12px;
}
.tray-bat {
	margin-left: 14px;
}
.tray-clock {
	width: 120px;
	margin-left: 16px;
	padding-bottom: 2px;
	display: flex;
	flex-direction: column;
	align-items: flex-end;
	line-height: 28px;
}
.tray-bell {
	margin-left: 14px;
	flex: none;
}
.task-dash {
	position: absolute;
	left: 809px;
	bottom: 6px;
	width: 17px;
	height: 4px;
	border-radius: 2px;
	background: #7c7674;
}
.task-dot {
	position: absolute;
	left: 870px;
	bottom: 6px;
	width: 5px;
	height: 5px;
	border-radius: 50%;
	background: #7c7674;
}
```
